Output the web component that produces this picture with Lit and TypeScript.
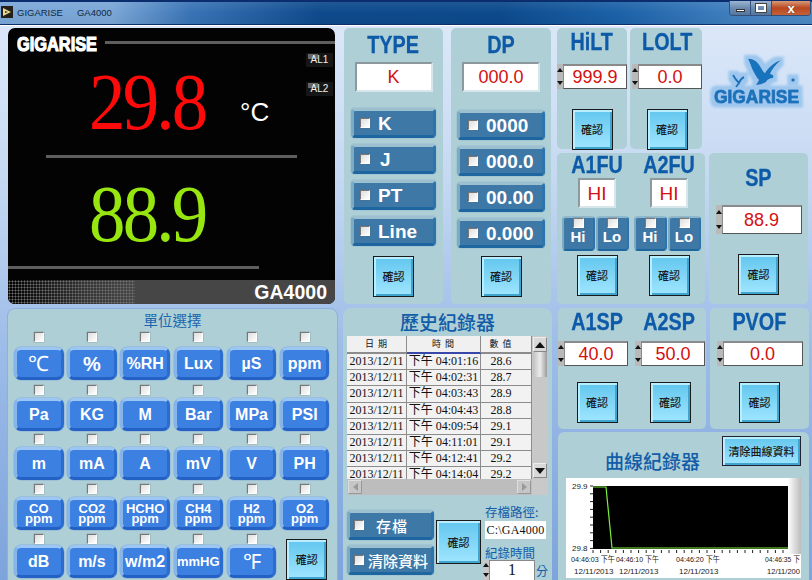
import { LitElement, html, css, svg } from "lit";
import { customElement } from "lit/decorators.js";

const history = [
  ["04:01:16", "28.6"],
  ["04:02:31", "28.7"],
  ["04:03:43", "28.9"],
  ["04:04:43", "28.8"],
  ["04:09:54", "29.1"],
  ["04:11:01", "29.1"],
  ["04:12:41", "29.2"],
  ["04:14:04", "29.2"],
];

const units: (string | string[])[] = [
  "℃", "%", "%RH", "Lux", "µS", "ppm",
  "Pa", "KG", "M", "Bar", "MPa", "PSI",
  "m", "mA", "A", "mV", "V", "PH",
  ["CO", "ppm"], ["CO2", "ppm"], ["HCHO", "ppm"], ["CH4", "ppm"], ["H2", "ppm"], ["O2", "ppm"],
  "dB", "m/s", "w/m2", "mmHG", "℉",
];

@customElement("app-root")
export class AppRoot extends LitElement {
  static styles = css`
    :host { display: block; width: 812px; height: 580px; overflow: hidden; font-family: "Liberation Sans", "Noto Sans CJK TC", sans-serif; }
    * { box-sizing: border-box; }
    .win { width: 812px; height: 580px; display: flex; flex-direction: column;
      background: linear-gradient(180deg, #dfeafa 0%, #c6d9f2 30%, #9dbce8 60%, #7ea4dc 100%); overflow: hidden; }
    .titlebar { height: 25px; flex: none; display: flex; align-items: flex-start; border-top: 2px solid #0b2d6e; border-bottom: 1px solid #0e2f66;
      background: linear-gradient(180deg, rgba(255,255,255,.08), rgba(255,255,255,0) 50%, rgba(0,0,0,.04)), linear-gradient(90deg, #7aa7d8 0, #7aa6d6 112px, #3a74b6 190px, #0e4a8c 320px, #0c4a8c 500px, #1c62a8 620px, #3f7ebe 730px, #4f8ac4 812px); }
    .appicon { width: 12px; height: 12px; margin: 4px 0 0 1px; background: #25201a; display: flex; align-items: center; justify-content: center; flex: none; }
    .titletext { margin: 4px 0 0 4px; font: 9.5px/13px "Liberation Sans", sans-serif; color: #10283f; display: flex; gap: 14px; }
    .winctl { margin-left: auto; display: flex; margin-right: 1px; height: 15px; margin-top: -1px; border: 1px solid #33507a; border-top: 0; border-radius: 0 0 4px 4px; overflow: hidden; }
    .winctl > div { display: flex; align-items: center; justify-content: center; height: 100%; border-right: 1px solid #33507a; background: linear-gradient(180deg, #9db4d0, #6d8bb0 50%, #56769e); }
    .w-min, .w-max { width: 21px; }
    .w-close { width: 38px; background: linear-gradient(180deg, #d89a78, #b9471f 50%, #c4623a) !important; border-right: 0 !important; }
    .i-min { width: 9px; height: 3px; background: #fff; border: 1px solid #333; margin-top: 4px; }
    .i-max { width: 10px; height: 8px; border: 2px solid #fff; outline: 1px solid #444; }
    .w-close span { color: #fff; font: bold 13px/13px "Liberation Sans", sans-serif; text-shadow: 0 0 1px #333; }

    .main { flex: 1; display: flex; flex-direction: column; padding: 2px 4px 0 8px; border-top: 1px solid #fff; }
    .row-top { display: flex; height: 276px; flex: none; }
    .row-bot { display: flex; height: 273px; flex: none; margin: 4px 0 0 -1px; }
    .panel { background: #aecfd6; border-radius: 5px; display: flex; flex-direction: column; align-items: center; position: relative; }

    .display { width: 327px; flex: none; background: #030303; border-radius: 7px; overflow: hidden; display: flex; flex-direction: column; position: relative; }
    .d-head { height: 25px; flex: none; display: flex; align-items: flex-start; }
    .d-logo { width: 80px; height: 18px; margin: 7px 0 0 9px; flex: none; }
    .d-logo text { font: bold 20px "Liberation Sans", sans-serif; fill: #fff; stroke: #fff; stroke-width: 1.2px; }
    .d-headline { flex: 1; height: 3px; margin: 13px 0 0 8px; background: #5e5e5e; }
    .al { position: absolute; right: 2px; width: 27px; height: 14px; background: #161616; color: #f0f0f0; font: 10px/14px "Liberation Sans", sans-serif; text-align: center; }
    .al::before { content: ""; position: absolute; left: 2px; top: 1px; width: 10px; height: 5px; background: #666; z-index: 0; }
    .al span { position: relative; }
    .al1 { top: 25px; } .al2 { top: 54px; }
    .r { font-family: "Liberation Serif", serif; font-size: 80px; display: flex; padding-left: 81px; flex: none; }
    .r1 { height: 102px; line-height: 98px; color: #ff0a0a; }
    .r2 { height: 108px; line-height: 112px; color: #97e60f; }
    .r span { display: block; width: 124px; letter-spacing: -3px; transform: scaleX(.91); transform-origin: left center; flex: none; white-space: nowrap; }
    .deg { font: 26px/1 "Liberation Sans", sans-serif; color: #fff; margin: 46px 0 0 27px; letter-spacing: 0; height: 30px; }
    .dl1 { height: 3px; width: 251px; margin-left: 38px; background: #5e5e5e; flex: none; }
    .dl2 { height: 3px; width: 251px; background: #5e5e5e; flex: none; }
    .d-foot { margin-top: 11px; height: 24px; flex: none; display: flex; background: #464646; align-items: center; }
    .dither { width: 127px; height: 24px; flex: none; background-image: radial-gradient(circle at center, #707070 0.9px, transparent 1.1px), linear-gradient(90deg, #000, #333 60%, #464646); background-size: 3px 3px, 100% 100%; }
    .d-foot b { margin-left: auto; margin-right: 8px; color: #fff; font: bold 19.5px/24px "Liberation Sans", sans-serif; }

    .title { color: #0d5aa8; font: bold 23px/26px "Liberation Sans", sans-serif; transform: scaleX(.86); white-space: nowrap; -webkit-text-stroke: .3px #0d5aa8; }
    .p-type { width: 99px; margin-left: 9px; padding-top: 4px; }
    .p-dp { width: 100px; margin-left: 8px; padding-top: 4px; }
    .field { background: #fff; border: 2px solid; border-color: #8c9a9e #d6e6ea #d6e6ea #8c9a9e; color: #d40f0f; font: 18px/1 "Liberation Sans", sans-serif; display: flex; align-items: center; justify-content: center; flex: none; }
    .f-type { width: 78px; height: 30px; margin-top: 4px; }
    .btns { display: flex; flex-direction: column; gap: 6px; margin-top: 16px; }
    .p-dp .btns { margin-top: 18px; }
    .tb { height: 30px; width: 85px; background: #3e78a6; border: 3px solid; border-color: #9cc0d0 #2c74ab #1d66a0 #7eaac2; border-radius: 4px; color: #fff; font: bold 19px/1 "Liberation Sans", "Noto Sans CJK TC", sans-serif; display: flex; align-items: center; padding-left: 6px; box-shadow: 0 0 0 1px rgba(150,190,205,.5); white-space: nowrap; }
    .p-dp .tb { width: 88px; padding-left: 8px; }
    .tb .lab { margin-left: 8px; }
    .tb.j .lab { margin-left: 10px; }
    .cb { width: 10px; height: 10px; flex: none; background: linear-gradient(135deg, #ddd, #fff); border: 1px solid; border-color: #777 #fff #fff #777; box-shadow: 0 0 1px #666; }
    .ok { width: 41px; height: 41px; flex: none; border: 1px solid #1a1a1a; background: #79d3f5; box-shadow: inset 2px 2px 0 #b8eeff, inset -2px -2px 0 #3fa5cf; color: #1c1c1c; font: 500 11px/1 "Noto Sans CJK TC", sans-serif; display: flex; align-items: center; justify-content: center; background-image: linear-gradient(180deg, #62c6ee, #a0e6ff); padding: 0; }
    .p-type .ok { margin-top: 10px; }
    .p-dp .ok { margin-top: 8px; }

    .right { margin-left: 6px; width: 251px; display: flex; flex-direction: column; flex: none; }
    .rt1 { height: 121px; display: flex; flex: none; }
    .rt2 { height: 151px; display: flex; margin-top: 4px; flex: none; }
    .p-lim { width: 72px; padding-top: 1px; }
    .p-lim + .p-lim { margin-left: 3px; padding-left: 2px; }
    .spin { display: flex; margin-top: 9px; flex: none; }
    .spinbtn { width: 6px; background: #b9b9b9; display: flex; flex-direction: column; justify-content: space-around; align-items: center; border: 0 solid #777; flex: none; }
    .up, .dn { width: 0; height: 0; border-left: 3px solid transparent; border-right: 3px solid transparent; }
    .up { border-bottom: 4px solid #111; } .dn { border-top: 4px solid #111; }
    .numf { background: #fff; border: 1px solid; border-color: #8a8a8a #555 #555 #8a8a8a; border-top-width: 2px; color: #d40f0f; font: 18px/1 "Liberation Sans", sans-serif; display: flex; align-items: center; justify-content: center; height: 25px; }
    .p-lim .ok { margin-top: 20px; }
    .logo { width: 107px; margin-top: 18px; flex: none; }
    .logo svg { display: block; }
    .logo text { font: bold 19px "Liberation Sans", sans-serif; fill: #1673bc; stroke: #1673bc; stroke-width: 1px; }

    .p-afu { width: 148px; display: grid; grid-template-columns: 72px 72px; column-gap: 0; padding: 0 2px; align-items: start; justify-items: center; }
    .afu-col { display: flex; flex-direction: column; align-items: center; width: 72px; }
    .afu-col .title { line-height: 25px; margin-left: 4px; }
    .f-afu { width: 38px; height: 30px; margin-top: 0; margin-left: 4px; font-size: 19px; }
    .hl { display: flex; gap: 1px; margin-top: 8px; }
    .hlb { width: 33px; height: 35px; background: #3e78a6; border: 2px solid; border-color: #8fb8cc #2c74ab #1d66a0 #7eaac2; border-radius: 4px; display: flex; flex-direction: column; align-items: center; color: #fff; font: bold 15px/16px "Liberation Sans", sans-serif; }
    .hlb .cb { margin-top: 0; width: 11px; height: 10px; }
    .hlb .lab { margin-top: 1px; }
    .afu-col .ok { margin-top: 4px; margin-left: 4px; }
    .p-sp { width: 99px; margin-left: 4px; padding-top: 12px; }
    .p-sp .spin { margin-top: 14px; }
    .p-sp .numf { height: 29px; }
    .p-sp .ok { margin-top: 20px; }

    .p-units { width: 331px; flex: none; padding: 2px 0 0 7px; align-items: flex-start; border-radius: 8px 8px 0 0; box-shadow: 0 0 0 1px #8cb0e2 inset; }
    .p-units .ut { width: 100%; padding-right: 7px; text-align: center; color: #1a66ae; font: 14.5px/20px "Noto Sans CJK TC", sans-serif; height: 22px; }
    .ugrid { display: grid; grid-template-columns: repeat(6, 49.5px); column-gap: 3.7px; grid-template-rows: 53px 49px 50px 50px 47px; }
    .ucell { display: flex; flex-direction: column; align-items: center; gap: 3px; }
    .ucell:nth-child(-n+6) { gap: 5px; }
    .ucell:nth-child(n+25) { gap: 1px; }
    .ub { width: 49.5px; height: 33px; flex: none; background: #3c80e2; border: 3px solid; border-color: #9cc6f4 #2a6cd0 #2362c4 #86b5ec; border-radius: 7px; color: #fff; font: bold 16px/1 "Liberation Sans", sans-serif; display: flex; flex-direction: column; align-items: center; justify-content: center; white-space: nowrap; box-shadow: 0 0 0 .5px #8ab0d8; }
    .ub.big { font-size: 21px; font-weight: normal; }
    .ub.pct { font-size: 20px; }
    .ub.sm { font-size: 13px; }
    .ub.stack { font-size: 13px; line-height: 10px; }
    .ucell.okc .ok { margin: 5px 0 0 4px; }

    .p-hist { width: 209px; margin-left: 5px; padding: 0 4px; flex: none; border-radius: 8px 8px 0 0; }
    .p-hist .ht, .p-curve .ht { color: #125ca8; font: 500 19px/28px "Noto Sans CJK TC", sans-serif; white-space: nowrap; }
    .p-hist .ht { height: 29px; }
    .tbl { width: 201px; height: 159px; flex: none; background: #c9c9c9; display: grid; grid-template-columns: 185px 16px; grid-template-rows: 143px 16px; }
    .cells { overflow: hidden; background: #f2f2f2; }
    .tr { display: grid; grid-template-columns: 60px 74px 51px; height: 16.2px; font: 12px/15px "Liberation Serif", "Noto Sans CJK TC", serif; color: #111; }
    .tr > div { border-right: 1px solid #8c8c8c; border-bottom: 1px solid #8c8c8c; white-space: nowrap; text-align: center; overflow: hidden; }
    .tr > div:nth-child(3) { padding-right: 10px; }
    .tr.h { height: 18px; font: 9px/15px "Noto Sans CJK TC", sans-serif; letter-spacing: 1px; }
    .tr.h > div { background: #f0f0f0; border-bottom: 2px solid #8c8c8c; }
    .tr.h > div:nth-child(2) { border-bottom-color: #3848a8; }
    .vbar { background: #c8c8c8; display: flex; flex-direction: column; align-items: center; padding: 1px 0; }
    .ar { width: 14px; height: 15px; flex: none; background: #d8d8d8; display: flex; align-items: center; justify-content: center; border: 1px solid; border-color: #eee #888 #888 #eee; }
    .ar i { width: 0; height: 0; border-left: 5px solid transparent; border-right: 5px solid transparent; }
    .ar .au { border-bottom: 6px solid #111; } .ar .ad { border-top: 6px solid #111; }
    .thumb { width: 14px; height: 25px; flex: none; background: linear-gradient(90deg, #c0c0c0, #ececec, #9c9c9c); }
    .vbar .gap { flex: 1; }
    .hbar { background: #bdbdbd; display: flex; justify-content: space-between; align-items: center; padding: 0 1px; }
    .ah { width: 14px; height: 14px; background: #c6c6c6; display: flex; align-items: center; justify-content: center; border: 1px solid; border-color: #ddd #999 #999 #ddd; }
    .ah i { width: 0; height: 0; border-top: 4px solid transparent; border-bottom: 4px solid transparent; }
    .ah .al-l { border-right: 5px solid #999; } .ah .al-r { border-left: 5px solid #999; }
    .lower { display: flex; width: 201px; margin-top: 9px; flex: none; }
    .lbtns { display: flex; flex-direction: column; gap: 5px; margin-top: 6px; }
    .lbtns .tb { width: 87px; font: 500 15px/1 "Noto Sans CJK TC", sans-serif; padding-left: 4px; }
    .lbtns .tb .lab { margin-left: 4px; }
    .lbtns .tb .lab.wide { margin-left: 12px; letter-spacing: 1px; }
    .lower .ok { width: 45px; height: 44px; margin: 16px 0 0 2px; }
    .saveinfo { margin-left: 4px; width: 63px; display: flex; flex-direction: column; color: #125ca8; font: 12.5px/15px "Noto Sans CJK TC", sans-serif; white-space: nowrap; }
    .path { background: #fff; height: 18px; width: 61px; margin-top: 2px; color: #111; font: 12px/18px "Liberation Serif", serif; text-align: center; letter-spacing: .2px; }
    .rtime { margin-top: 6px; }
    .minrow { display: flex; margin-top: 0; align-items: flex-start; }
    .minrow .spinbtn { height: 20px; background: #c8c8c8; margin-left: -2px; }
    .minf { width: 46px; height: 21px; background: #fff; border: 1px solid; border-color: #888 #888 #fff #888; color: #111; text-align: center; font: 16px/18px "Liberation Serif", serif; }
    .minrow span { margin-left: 1px; font-size: 12px; line-height: 22px; }

    .rb1 { height: 121px; display: flex; flex: none; }
    .p-pair { width: 148px; display: grid; grid-template-columns: 74px 74px; justify-items: center; padding-top: 0; align-items: start; }
    .pair-col { display: flex; flex-direction: column; align-items: center; }
    .pair-col .title { line-height: 28px; }
    .pair-col .spin, .p-pvof .spin { margin-top: 5px; }
    .pair-col .ok, .p-pvof .ok { margin-top: 16px; }
    .pair-col.c1 .title, .pair-col.c1 .ok { margin-left: 4px; }
    .pair-col.c1 .spin { margin-left: -4px; }
    .pair-col.c2 .spin { margin-left: 2px; }
    .pair-col.c2 .ok { margin-left: 2px; }
    .p-pvof { width: 99px; margin-left: 4px; }
    .p-pvof .title { line-height: 28px; }
    .p-curve { height: 149px; margin-top: 3px; flex: none; width: 251px; border-radius: 6px 6px 0 0; display: block; }
    .curvehead { display: flex; align-items: flex-start; height: 46px; }
    .curvehead .ht { margin: 15px 0 0 47px; }
    .clear { margin: 4px 8px 0 auto; width: 79px; height: 30px; border: 1px solid #223; background: linear-gradient(180deg, #62c6ee, #a0e6ff); box-shadow: inset 2px 2px 0 #b8eeff, inset -2px -2px 0 #3fa5cf; font: 500 11px/28px "Noto Sans CJK TC", sans-serif; color: #1c1c1c; text-align: center; white-space: nowrap; }
    .chart { display: block; margin-left: 8px; }
    .chart text { font: 8px "Liberation Sans", "Noto Sans CJK TC", sans-serif; fill: #222; }
  `;

  ok() { return html`<div class="ok">確認</div>`; }
  spin(v: string, cls = "", w = 64) {
    return html`<div class="spin ${cls}"><div class="spinbtn"><i class="up"></i><i class="dn"></i></div><div class="numf" style="width:${w}px">${v}</div></div>`;
  }
  tb(label: string, cls = "") {
    return html`<div class="tb ${cls}"><div class="cb"></div><span class="lab">${label}</span></div>`;
  }
  hl(l: string) { return html`<div class="hlb"><div class="cb"></div><span class="lab">${l}</span></div>`; }

  unit(u: string | string[]) {
    if (Array.isArray(u)) {
      return html`<div class="ucell"><div class="cb"></div><div class="ub stack"><span>${u[0]}</span><span>${u[1]}</span></div></div>`;
    }
    const cls = u === "℃" || u === "℉" ? "big" : u === "%" ? "pct" : u === "mmHG" ? "sm" : "";
    return html`<div class="ucell"><div class="cb"></div><div class="ub ${cls}">${u}</div></div>`;
  }

  logo() {
    return html`<svg width="107" height="70" viewBox="0 0 107 70">
      <defs>
        <filter id="halo" x="-10%" y="-20%" width="120%" height="140%">
          <feMorphology in="SourceAlpha" operator="dilate" radius="3.5" result="d"/>
          <feGaussianBlur in="d" stdDeviation=".8" result="b"/>
          <feFlood flood-color="#9dc7ee"/>
          <feComposite in2="b" operator="in" result="h"/>
          <feMerge><feMergeNode in="h"/><feMergeNode in="SourceGraphic"/></feMerge>
        </filter>
      </defs>
      <g filter="url(#halo)">
        <path fill="#1673bc" d="M46 13 C50 12 55 15 58 20 C60 23 61 26 63 27 C66 22 72 16 79 14 C74 18 70 23 68 28 C71 28 72 30 71 32 C68 32 66 33 64 36 C61 38 57 39 54 39 L57 34 C54 31 51 25 49 20 C48 17 47 15 46 13 Z"/>
        <path fill="none" stroke="#1673bc" stroke-width="2" d="M31 29 C33 33 35 35 37 37 C38 34 40 32 42 31 M37 37 L34 41"/>
        <circle cx="91" cy="34" r="1.8" fill="#1673bc"/>
        <text x="12" y="56.5" textLength="85" lengthAdjust="spacingAndGlyphs">GIGARISE</text>
      </g>
    </svg>`;
  }

  chart() {
    const ticks = [];
    for (let x = 592; x <= 787; x += 7.6) ticks.push(svg`<line x1=${x - 565} x2=${x - 565} y1="72" y2="75" stroke="#222" stroke-width="1"/>`);
    const yt = [];
    for (let y = 485; y <= 548; y += 7.8) yt.push(svg`<line x1="24" x2="27" y1=${y - 477} y2=${y - 477} stroke="#222"/>`);
    return html`<svg class="chart" width="235" height="100" viewBox="0 0 235 100">
      <defs><linearGradient id="edge" x1="0" x2="1" y1="0" y2="0"><stop offset="0" stop-color="#fff"/><stop offset="1" stop-color="#bcbcbc"/></linearGradient></defs>
      <rect width="235" height="100" fill="#fff"/>
      <rect x="222" width="13" height="76" fill="url(#edge)"/>
      <rect x="27" y="8" width="195" height="63" fill="#000"/>
      ${yt}${ticks}
      <path d="M27 9 H40 L46 70 H222" fill="none" stroke="#7cf03c" stroke-width="1.2"/>
      <text x="6" y="11">29.9</text>
      <text x="6" y="73">29.8</text>
      <text x="5" y="84" textLength="44" lengthAdjust="spacingAndGlyphs">04:46:03 下午</text>
      <text x="50" y="84" textLength="43" lengthAdjust="spacingAndGlyphs">04:46:10 下午</text>
      <text x="110" y="84" textLength="44" lengthAdjust="spacingAndGlyphs">04:46:20 下午</text>
      <text x="199" y="84" textLength="35" lengthAdjust="spacingAndGlyphs">04:46:35 下</text>
      <text x="8" y="96">12/11/2013</text>
      <text x="53" y="96">12/11/2013</text>
      <text x="113" y="96">12/11/2013</text>
      <text x="201" y="96" textLength="33" lengthAdjust="spacingAndGlyphs">12/11/200</text>
    </svg>`;
  }

  render() {
    return html`<div class="win">
      <div class="titlebar">
        <div class="appicon"><svg width="10" height="10" viewBox="0 0 10 10"><path d="M1 1 L9 5 L1 9 Z" fill="#e8d890"/><path d="M3 4 L6 5 L3 6Z" fill="#333"/></svg></div>
        <div class="titletext"><span>GIGARISE</span><span>GA4000</span></div>
        <div class="winctl">
          <div class="w-min"><i class="i-min"></i></div>
          <div class="w-max"><i class="i-max"></i></div>
          <div class="w-close"><span>x</span></div>
        </div>
      </div>
      <div class="main">
        <div class="row-top">
          <div class="display">
            <div class="d-head">
              <svg class="d-logo" viewBox="0 0 80 18"><text x="0" y="16" textLength="80" lengthAdjust="spacingAndGlyphs">GIGARISE</text></svg>
              <div class="d-headline"></div>
            </div>
            <div class="al al1"><span>AL1</span></div>
            <div class="al al2"><span>AL2</span></div>
            <div class="r r1"><span>29.8</span><div class="deg">°C</div></div>
            <div class="dl1"></div>
            <div class="r r2"><span>88.9</span></div>
            <div class="dl2"></div>
            <div class="d-foot"><div class="dither"></div><b>GA4000</b></div>
          </div>

          <div class="panel p-type">
            <div class="title">TYPE</div>
            <div class="field f-type">K</div>
            <div class="btns">${this.tb("K")}${this.tb("J", "j")}${this.tb("PT")}${this.tb("Line")}</div>
            ${this.ok()}
          </div>

          <div class="panel p-dp">
            <div class="title">DP</div>
            <div class="field f-type">000.0</div>
            <div class="btns">${this.tb("0000")}${this.tb("000.0")}${this.tb("00.00")}${this.tb("0.000")}</div>
            ${this.ok()}
          </div>

          <div class="right">
            <div class="rt1">
              <div class="panel p-lim"><div class="title">HiLT</div>${this.spin("999.9")}${this.ok()}</div>
              <div class="panel p-lim"><div class="title">LOLT</div>${this.spin("0.0")}${this.ok()}</div>
              <div class="logo">${this.logo()}</div>
            </div>
            <div class="rt2">
              <div class="panel p-afu">
                <div class="afu-col"><div class="title">A1FU</div><div class="field f-afu">HI</div><div class="hl">${this.hl("Hi")}${this.hl("Lo")}</div>${this.ok()}</div>
                <div class="afu-col"><div class="title">A2FU</div><div class="field f-afu">HI</div><div class="hl">${this.hl("Hi")}${this.hl("Lo")}</div>${this.ok()}</div>
              </div>
              <div class="panel p-sp"><div class="title">SP</div>${this.spin("88.9", "", 80)}${this.ok()}</div>
            </div>
          </div>
        </div>

        <div class="row-bot">
          <div class="panel p-units">
            <div class="ut">單位選擇</div>
            <div class="ugrid">
              ${units.map((u) => this.unit(u))}
              <div class="ucell okc">${this.ok()}</div>
            </div>
          </div>

          <div class="panel p-hist">
            <div class="ht">歷史紀錄器</div>
            <div class="tbl">
              <div class="cells">
                <div class="tr h"><div>日 期</div><div>時 間</div><div>數 值</div></div>
                ${history.map(([t, v]) => html`<div class="tr"><div>2013/12/11</div><div>下午 ${t}</div><div>${v}</div></div>`)}
              </div>
              <div class="vbar"><div class="ar"><i class="au"></i></div><div class="thumb"></div><div class="gap"></div><div class="ar"><i class="ad"></i></div></div>
              <div class="hbar"><div class="ah"><i class="al-l"></i></div><div class="ah"><i class="al-r"></i></div></div>
              <div></div>
            </div>
            <div class="lower">
              <div class="lbtns">
                <div class="tb"><div class="cb"></div><span class="lab wide">存檔</span></div>
                <div class="tb"><div class="cb"></div><span class="lab">清除資料</span></div>
              </div>
              ${this.ok()}
              <div class="saveinfo">
                <div>存檔路徑:</div>
                <div class="path">C:\\GA4000</div>
                <div class="rtime">紀錄時間</div>
                <div class="minrow"><div class="spinbtn"><i class="up"></i><i class="dn"></i></div><div class="minf">1</div><span>分</span></div>
              </div>
            </div>
          </div>

          <div class="right">
            <div class="rb1">
              <div class="panel p-pair">
                <div class="pair-col c1"><div class="title">A1SP</div>${this.spin("40.0")}${this.ok()}</div>
                <div class="pair-col c2"><div class="title">A2SP</div>${this.spin("50.0")}${this.ok()}</div>
              </div>
              <div class="panel p-pvof"><div class="title">PVOF</div>${this.spin("0.0", "", 80)}${this.ok()}</div>
            </div>
            <div class="panel p-curve">
              <div class="curvehead"><div class="ht">曲線紀錄器</div><div class="clear">清除曲線資料</div></div>
              ${this.chart()}
            </div>
          </div>
        </div>
      </div>
    </div>`;
  }
}
